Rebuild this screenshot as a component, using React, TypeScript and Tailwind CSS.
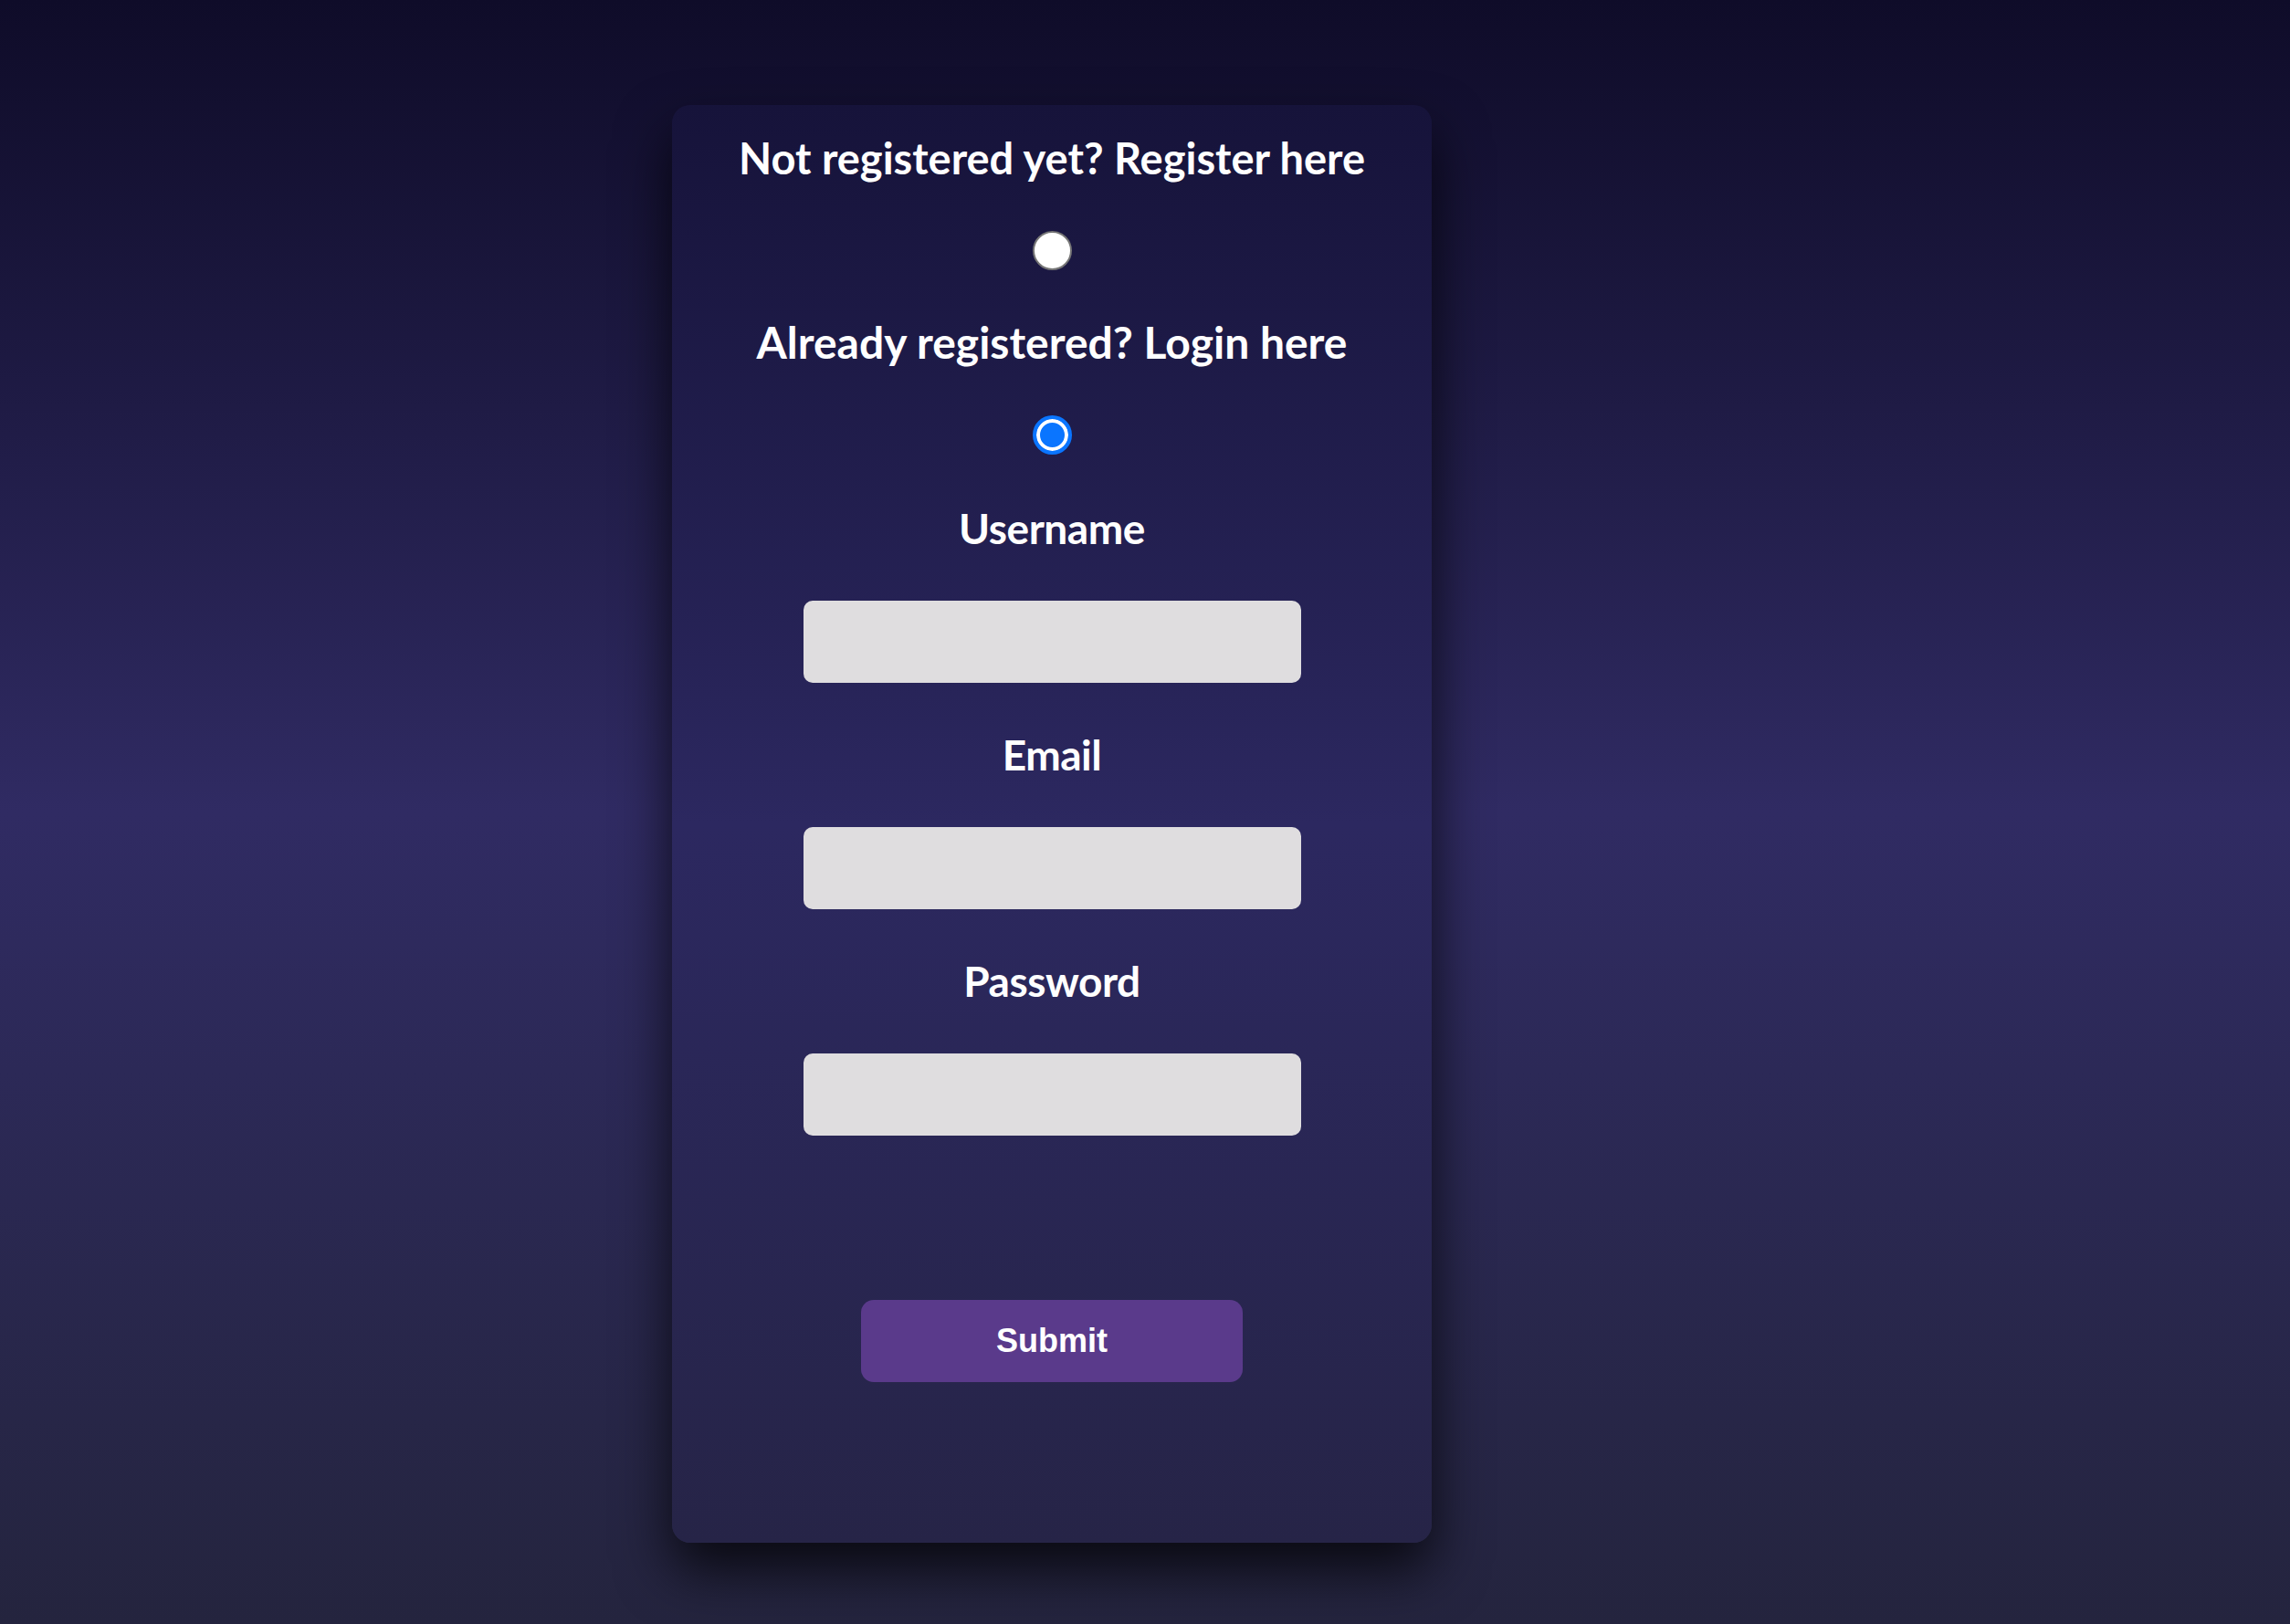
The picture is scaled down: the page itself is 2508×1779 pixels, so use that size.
import React, { useState } from 'react';

const headingFont = { fontFamily: 'Lato, "Noto Sans", sans-serif' };

const radioClass =
  'h-[43px] w-[43px] appearance-none rounded-full border-2 border-[#767676] bg-white checked:border-[4px] checked:border-[#0a75ff] checked:bg-[#0a75ff] checked:shadow-[inset_0_0_0_4px_white]';

const Field = ({ label, type, first }: { label: string; type: string; first?: boolean }) => (
  <>
    <label
      className={`${first ? 'mt-[51px]' : 'mt-[49px]'} h-[60px] leading-[60px] text-[46px] font-bold text-white tracking-[-0.01em]`}
      style={headingFont}
    >
      {label}
    </label>
    <input
      type={type}
      className="mt-[49px] h-[90px] w-[545px] rounded-[10px] bg-[#dfdddf] px-4 text-[28px] outline-none"
    />
  </>
);

const App = () => {
  const [mode, setMode] = useState<'register' | 'login'>('login');

  return (
    <div className="min-h-[1779px] w-full bg-gradient-to-b from-[#0f0c29] via-[#302b63] to-[#24243e] pt-[115px] pb-[89px]">
      <form
        className="ml-[736px] flex h-[1575px] w-[832px] flex-col items-center rounded-[20px] bg-gradient-to-b from-[#16133a] via-[#2c2860] to-[#262447] pt-[28px] shadow-[0_30px_60px_rgba(0,0,0,0.75)]"
        onSubmit={(e) => e.preventDefault()}
      >
        <h2
          className="h-[60px] leading-[60px] text-[47px] font-bold text-white"
          style={headingFont}
        >
          Not registered yet? Register here
        </h2>
        <input
          type="radio"
          name="mode"
          checked={mode === 'register'}
          onChange={() => setMode('register')}
          className={`mt-[50px] ${radioClass}`}
        />
        <h2
          className="mt-[49px] h-[60px] leading-[60px] text-[48px] font-bold text-white"
          style={headingFont}
        >
          Already registered? Login here
        </h2>
        <input
          type="radio"
          name="mode"
          checked={mode === 'login'}
          onChange={() => setMode('login')}
          className={`mt-[50px] ${radioClass}`}
        />

        <Field label="Username" type="text" first />
        <Field label="Email" type="email" />
        <Field label="Password" type="password" />

        <button
          type="submit"
          className="mt-[180px] h-[90px] w-[418px] rounded-[14px] bg-[#5a3a8b] text-[36px] font-bold text-white"
          style={{ fontFamily: '"Liberation Sans", Arial, sans-serif' }}
        >
          Submit
        </button>
      </form>
    </div>
  );
};

export default App;
